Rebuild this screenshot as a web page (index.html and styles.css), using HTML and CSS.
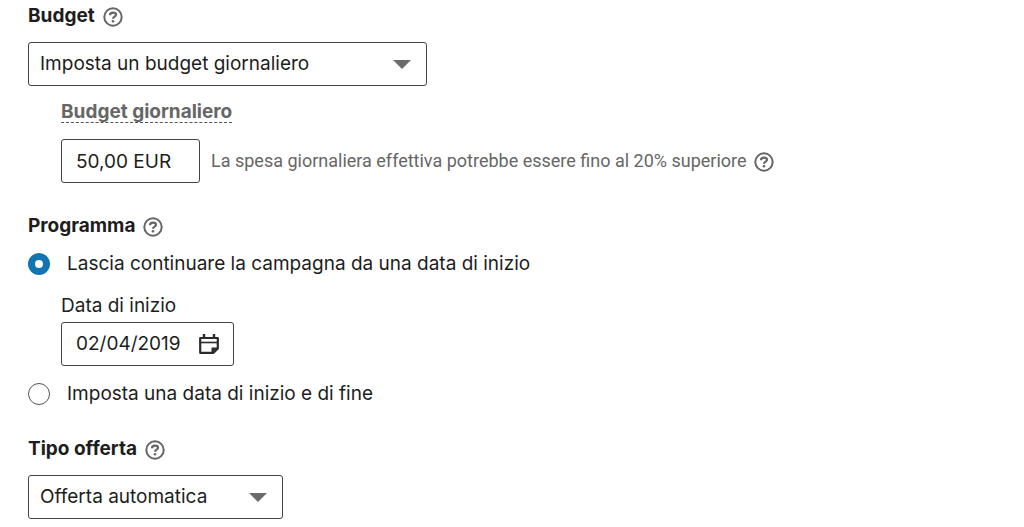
FILE: index.html
```
<!DOCTYPE html>
<html lang="it">
<head>
    <meta charset="UTF-8">
    <title>Budget e programma</title>
    <link rel="stylesheet" href="styles.css">
</head>
<body>
<svg class="sprite" aria-hidden="true">
    <symbol id="help" viewBox="0 0 20 20">
        <circle cx="10" cy="10" r="8.7" fill="none" stroke="currentColor" stroke-width="2"/>
        <path d="M7 8.2C7 6.4 8.2 5.6 10 5.6s3 .8 3 2.2c0 1.9-3 1.9-3 4" fill="none" stroke="currentColor" stroke-width="2.2"/>
        <circle cx="10" cy="14.3" r="1.3" fill="currentColor"/>
    </symbol>
</svg>
<form class="campaign">
    <section class="group">
        <div class="title">
            <h2><label for="budget">Budget</label></h2>
            <button type="button" class="help" aria-label="Aiuto budget"><svg><use href="#help"/></svg></button>
        </div>
        <div class="select budgetType">
            <select id="budget">
                <option>Imposta un budget giornaliero</option>
            </select>
        </div>
        <div class="sub">
            <label class="dashed" for="daily">Budget giornaliero</label>
            <div class="row">
                <input type="text" class="box daily" id="daily" value="50,00 EUR">
                <span class="note">La spesa giornaliera effettiva potrebbe essere fino al 20% superiore</span>
                <button type="button" class="help" aria-label="Aiuto spesa"><svg><use href="#help"/></svg></button>
            </div>
        </div>
    </section>

    <section class="group">
        <div class="title">
            <h2>Programma</h2>
            <button type="button" class="help" aria-label="Aiuto programma"><svg><use href="#help"/></svg></button>
        </div>
        <label class="option"><input type="radio" name="schedule" checked>Lascia continuare la campagna da una data di inizio</label>
        <div class="sub start">
            <label for="start">Data di inizio</label>
            <div class="box date">
                <input type="text" id="start" value="02/04/2019">
                <svg class="calendar" viewBox="0 0 20 20">
                    <path d="M1.2 4h17.6v10.5L14.5 18.8H1.2z" fill="none" stroke="currentColor" stroke-width="2.2" stroke-linejoin="round"/>
                    <path d="M2 8.5h16" stroke="currentColor" stroke-width="1.6"/>
                    <path d="M5 0v4M15 0v4" stroke="currentColor" stroke-width="2.4"/>
                    <path d="M12.5 19.5v-6H19z" fill="currentColor"/>
                </svg>
            </div>
        </div>
        <label class="option"><input type="radio" name="schedule">Imposta una data di inizio e di fine</label>
    </section>

    <section class="group">
        <div class="title">
            <h2><label for="bid">Tipo offerta</label></h2>
            <button type="button" class="help" aria-label="Aiuto offerta"><svg><use href="#help"/></svg></button>
        </div>
        <div class="select bidType">
            <select id="bid">
                <option>Offerta automatica</option>
            </select>
        </div>
    </section>
</form>
</body>
</html>
```
FILE: styles.css
```
*{ padding: 0; margin: 0; box-sizing: border-box;}
body{ background: #fff; color: #1d1d1d; font: 19px/24px Inter, "Liberation Sans", sans-serif;}
input, select, button{ font: inherit; color: inherit;}
.sprite{ display: none;}
.campaign{ padding: 4px 28px 8px;}
.group{ margin-bottom: 31px;}
.group:last-child{ margin-bottom: 0;}

.title{ display: flex; align-items: center; gap: 8px; margin-bottom: 14px;}
h2{ font-size: 19px; line-height: 24px; font-weight: 700;}
.help{ display: flex; padding-top: 2px; border: 0; background: none; color: #666; cursor: pointer;}
.help svg{ width: 20px; height: 20px;}

.select{ display: grid; align-items: center; max-width: 100%;}
.select select{ grid-area: 1 / 1; appearance: none; width: 100%; height: 44px; padding: 0 40px 0 11px; border: 1px solid #444; border-radius: 3px; background: #fff;}
.select::after{ content: ""; grid-area: 1 / 1; justify-self: end; z-index: 1; margin-right: 16px; border: 9px solid transparent; border-top-color: #6b6b6b; border-bottom: 0; pointer-events: none;}
.budgetType{ width: 399px;}
.bidType{ width: 255px;}

.sub{ display: flex; flex-direction: column; align-items: flex-start; padding: 16px 0 0 33px;}
.dashed{ margin-bottom: 16px; border-bottom: 1px dashed #555; color: #666; font-weight: 700; line-height: 20px;}
.row{ display: flex; align-items: center;}
.box{ height: 44px; padding: 0 14px; border: 1px solid #444; border-radius: 3px; background: #fff;}
.daily{ width: 139px;}
.note{ margin: 0 7px 0 11px; color: #666; font-family: Roboto, sans-serif; font-size: 18px;}

.option{ display: flex; align-items: center; gap: 17px;}
.option input{ appearance: none; flex: none; width: 22px; height: 22px; border: 1px solid #555; border-radius: 50%; background: #fff;}
.option input:checked{ border: 7px solid #1175b4;}
.start{ padding: 18px 0 16px 33px;}
.date{ display: flex; align-items: center; width: 173px; margin-top: 4px;}
.date input{ flex: 1; min-width: 0; border: 0; outline: 0; background: none;}
.calendar{ width: 20px; height: 20px; color: #2b2b2b;}
```
